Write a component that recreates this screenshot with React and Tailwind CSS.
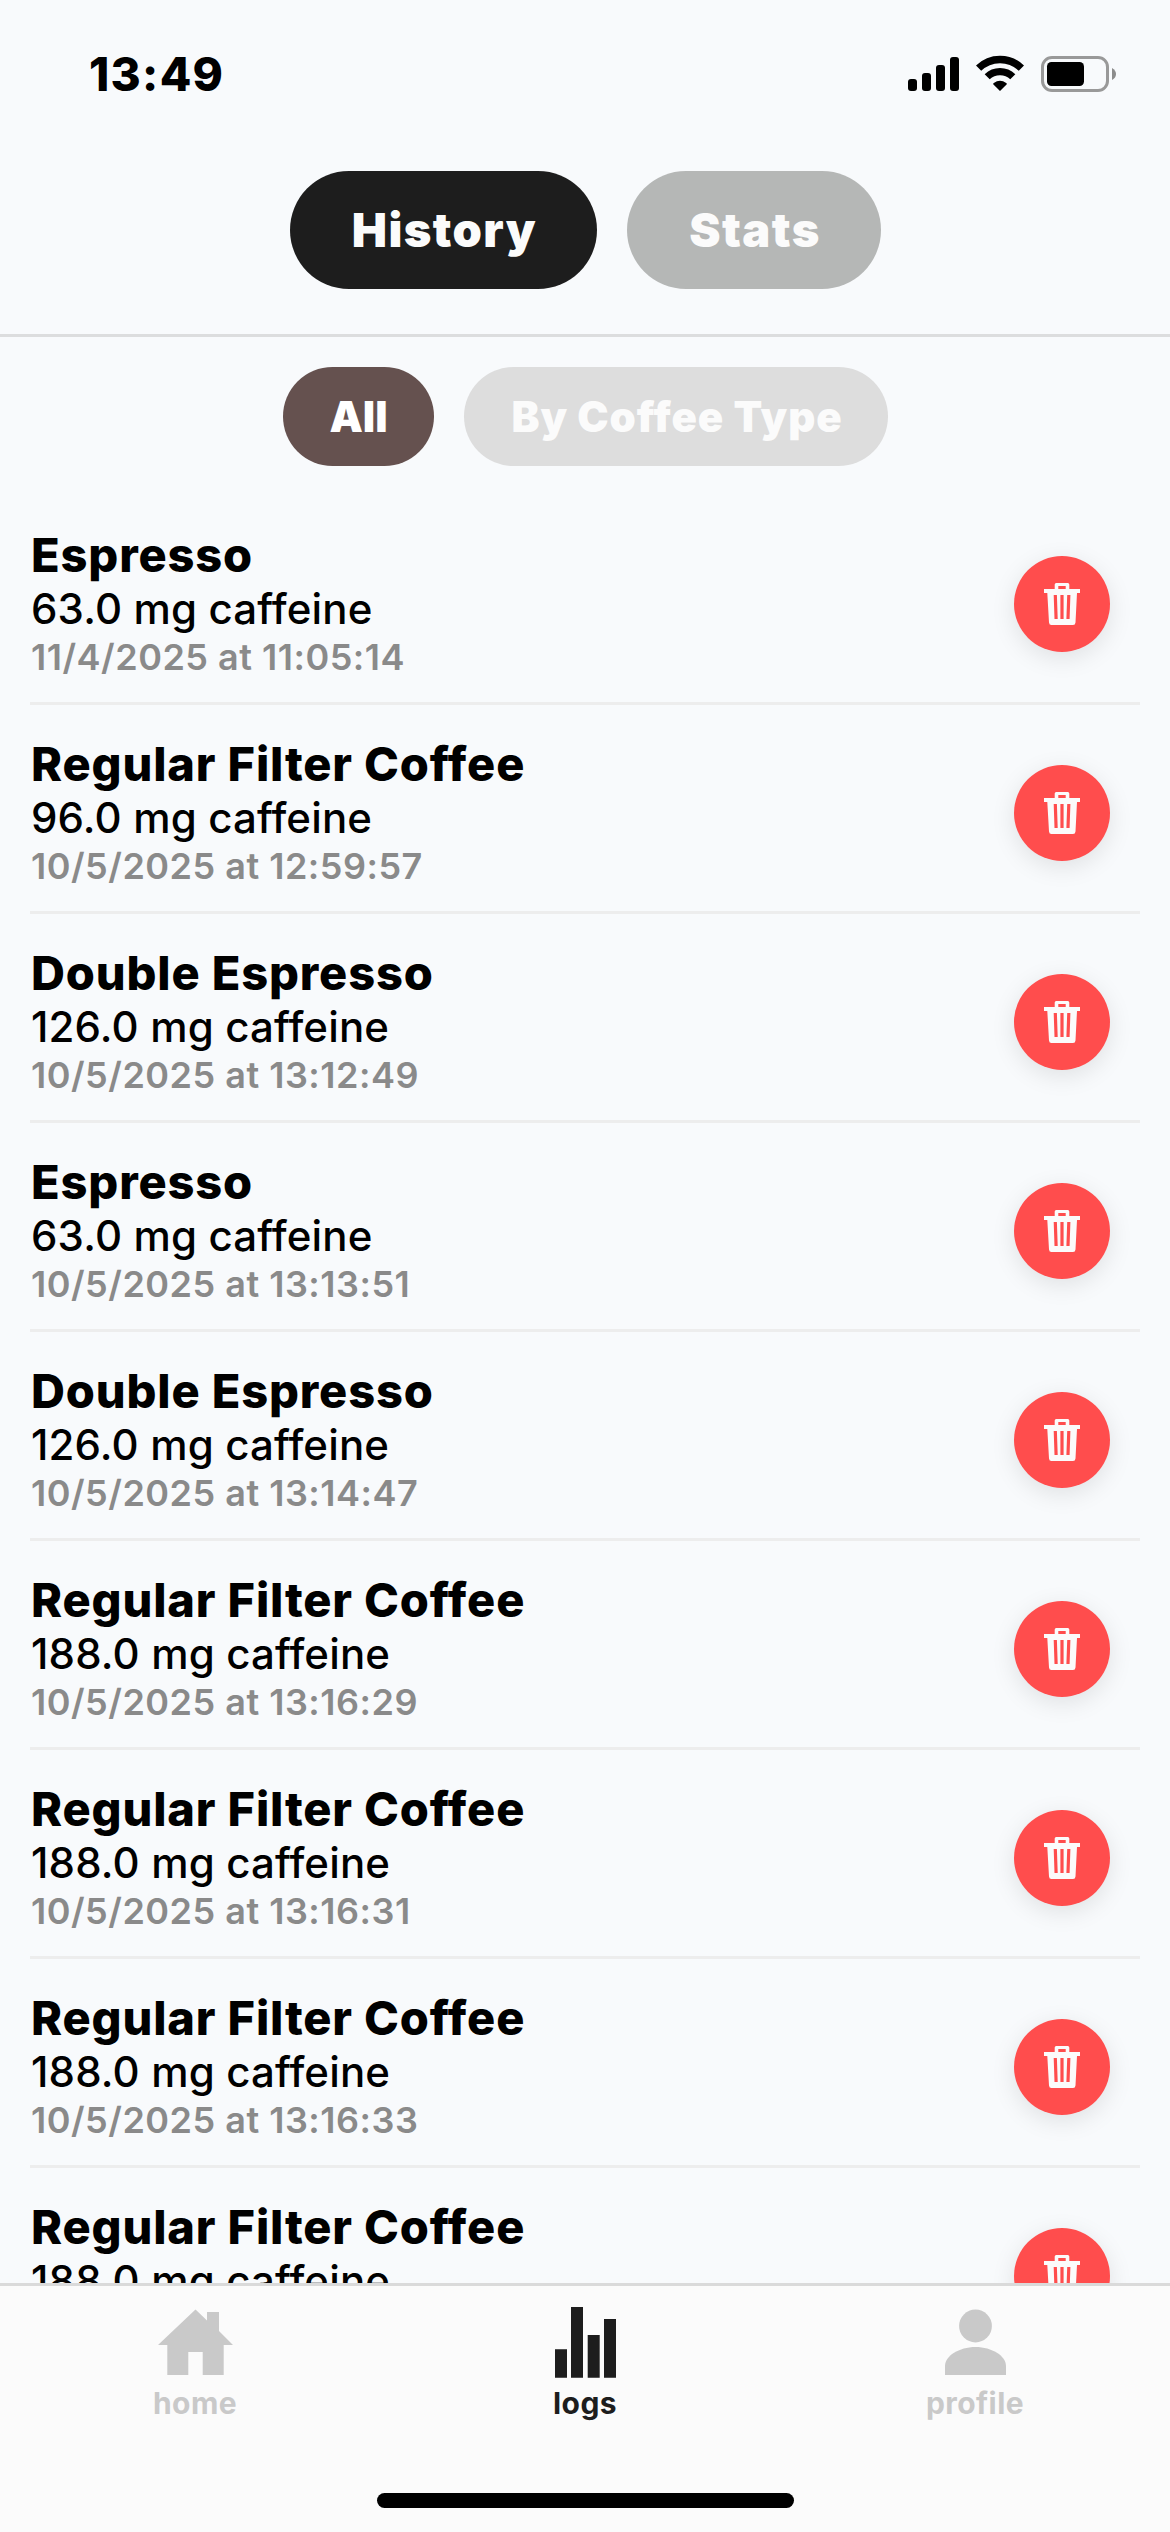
const entries = [
    { name: 'Espresso', caffeine: '63.0', date: '11/4/2025', time: '11:05:14' },
    { name: 'Regular Filter Coffee', caffeine: '96.0', date: '10/5/2025', time: '12:59:57' },
    { name: 'Double Espresso', caffeine: '126.0', date: '10/5/2025', time: '13:12:49' },
    { name: 'Espresso', caffeine: '63.0', date: '10/5/2025', time: '13:13:51' },
    { name: 'Double Espresso', caffeine: '126.0', date: '10/5/2025', time: '13:14:47' },
    { name: 'Regular Filter Coffee', caffeine: '188.0', date: '10/5/2025', time: '13:16:29' },
    { name: 'Regular Filter Coffee', caffeine: '188.0', date: '10/5/2025', time: '13:16:31' },
    { name: 'Regular Filter Coffee', caffeine: '188.0', date: '10/5/2025', time: '13:16:33' },
    { name: 'Regular Filter Coffee', caffeine: '188.0' },
];

const StatusBar = () => (
    <div className="flex h-[141px] shrink-0 items-start justify-between pl-[89px] pr-[54px] pt-[46px]">
        <span className="text-[46px] leading-[56px] font-extrabold tracking-[1.3px] text-black">13:49</span>
        <div className="flex pt-[9px]">
            <svg width="51" height="36" viewBox="0 0 51 36" fill="#000">
                <rect x="0" y="24" width="9" height="12" rx="3" />
                <rect x="14" y="18" width="9" height="18" rx="3" />
                <rect x="28" y="10" width="9" height="26" rx="3" />
                <rect x="42" y="2" width="9" height="34" rx="3" />
            </svg>
            <svg className="ml-[17px]" width="48" height="36" viewBox="0 0 48 36" fill="none" stroke="#000">
                <path d="M2.6 13.2A30.5 30.5 0 0 1 45.4 13.2" strokeWidth="7.4" />
                <path d="M11.2 21.8A18.3 18.3 0 0 1 36.8 21.8" strokeWidth="7.2" />
                <path d="M24 36L17.2 29.2Q17 28.5 17.8 28A10.5 10.5 0 0 1 30.2 28Q31 28.5 30.8 29.2Z" fill="#000" stroke="none" />
            </svg>
            <svg className="ml-[17px]" width="75" height="37" viewBox="0 0 75 37">
                <rect x="1.5" y="2.5" width="65" height="33" rx="9.5" fill="none" stroke="#999" strokeWidth="3" />
                <rect x="6" y="7" width="37" height="24" rx="4.5" fill="#000" />
                <path d="M71 13C73.700 14.500 75 16.500 75 19S73.700 23.500 71 25Z" fill="#8c8c8c" />
            </svg>
        </div>
    </div>
);

const TrashIcon = () => (
    <svg width="36" height="42" viewBox="0 0 36 42" fill="#fbfbfb">
        <path
            fillRule="evenodd"
            d="M10.700 6V1.500Q10.700 0 12.200 0H23.800Q25.300 0 25.300 1.500V6H36V10H33L31.500 39.500Q31.300 42 29 42H7.500Q5.200 42 5 39.500L3.300 10H0V6ZM14.300 3V6H21.700V3ZM9.700 12L10.500 36H13.700L12.900 12ZM16.400 12V36H19.600V12ZM23.200 12L22.400 36H25.600L26.400 12Z"
        />
    </svg>
);

const HomeIcon = () => (
    <svg width="75" height="71" viewBox="0 0 75 71" fill="#c9c9c9">
        <path d="M37.500 2.500L49 13.500V5H61V24L75 38H65.700V68H44.700V45H30.300V68H9.300V38H0Z" />
    </svg>
);

const LogsIcon = () => (
    <svg width="61" height="71" viewBox="0 0 61 71" fill="#1d1d1d">
        <path d="M0 42.300H12V70.700H0ZM16 0H28V70.700H16ZM32.700 28H44.700V70.700H32.700ZM49 12H61V70.700H49Z" />
    </svg>
);

const ProfileIcon = () => (
    <svg width="61" height="71" viewBox="0 0 61 71" fill="#c9c9c9">
        <circle cx="30.500" cy="19" r="16.400" />
        <path d="M0 68V59C0 49 14 40 30.500 40S61 49 61 59V68Z" />
    </svg>
);

const tabs = [
    { label: 'home', icon: HomeIcon, colorClass: 'text-[#c9c9c9]' },
    { label: 'logs', icon: LogsIcon, colorClass: 'text-[#1d1d1d]' },
    { label: 'profile', icon: ProfileIcon, colorClass: 'text-[#c9c9c9]' },
];

const LogRow = ({ entry }) => (
    <div className="flex h-[209px] shrink-0 items-start justify-between border-b-[3px] border-[#ededed] pr-[30px] pl-px">
        <div className="pt-[30px] whitespace-nowrap text-black">
            <h2 className="text-[47px] leading-[57px] font-extrabold tracking-[0.85px]">{entry.name}</h2>
            <p className="text-[42px] leading-[52px] font-medium tracking-[0.15px]">{entry.caffeine} mg caffeine</p>
            {entry.date && (
                <p className="text-[36px] leading-[45px] font-semibold tracking-[0.5px] text-[#8a8a8a]">{entry.date} at {entry.time}</p>
            )}
        </div>
        <button className="mt-[60px] flex size-24 items-center justify-center rounded-full bg-[#ff4d4d] shadow-[0_6px_24px_rgba(0,0,0,0.1)]">
            <TrashIcon />
        </button>
    </div>
);

const App = () => {
    return (
        <div className="flex h-[2532px] w-[1170px] flex-col overflow-hidden bg-[#f8fafc] font-['Inter',sans-serif]">
            <StatusBar />

            {/* History / Stats switch */}
            <div className="flex h-[196px] shrink-0 justify-center gap-[30px] border-b-[3px] border-[#dcddde] pt-[30px] pl-px">
                <button className="h-[118px] w-[307px] rounded-full bg-[#1d1d1d] pl-0.5 text-[47px] font-black tracking-[1.4px] text-[#fbfbfb]">History</button>
                <button className="h-[118px] w-[254px] rounded-full bg-[#b5b7b6] pl-0.5 text-[47px] font-black tracking-[1.4px] text-[#fbfbfb]">Stats</button>
            </div>

            {/* Filters */}
            <div className="flex h-[159px] shrink-0 justify-center gap-[30px] pt-[30px] pl-px">
                <button className="h-[99px] w-[151px] rounded-full bg-[#65514f] text-[42px] font-black text-white">All</button>
                <button className="h-[99px] w-[424px] rounded-full bg-[#ddd] pl-0.5 text-[42px] font-black tracking-[0.9px] text-[#fbfbfb]">By Coffee Type</button>
            </div>

            {/* Coffee log */}
            <div className="flex min-h-0 flex-1 flex-col overflow-hidden px-[30px]">
                {entries.map((entry, idx) => (
                    <LogRow key={idx} entry={entry} />
                ))}
            </div>

            {/* Bottom navigation */}
            <nav className="flex h-[249px] shrink-0 flex-col items-center border-t-[3px] border-[#dadada] bg-[#fbfbfb]">
                <div className="grid w-full grid-cols-3 pt-[21px]">
                    {tabs.map(({ label, icon: Icon, colorClass }) => (
                        <div key={label} className="flex flex-col items-center">
                            <Icon />
                            <span className={`mt-[7px] text-[30px] leading-[36px] font-bold tracking-[0.4px] ${colorClass}`}>{label}</span>
                        </div>
                    ))}
                </div>
                <div className="mt-[72px] h-[15px] w-[417px] rounded-full bg-black" />
            </nav>
        </div>
    );
};

export default App;
